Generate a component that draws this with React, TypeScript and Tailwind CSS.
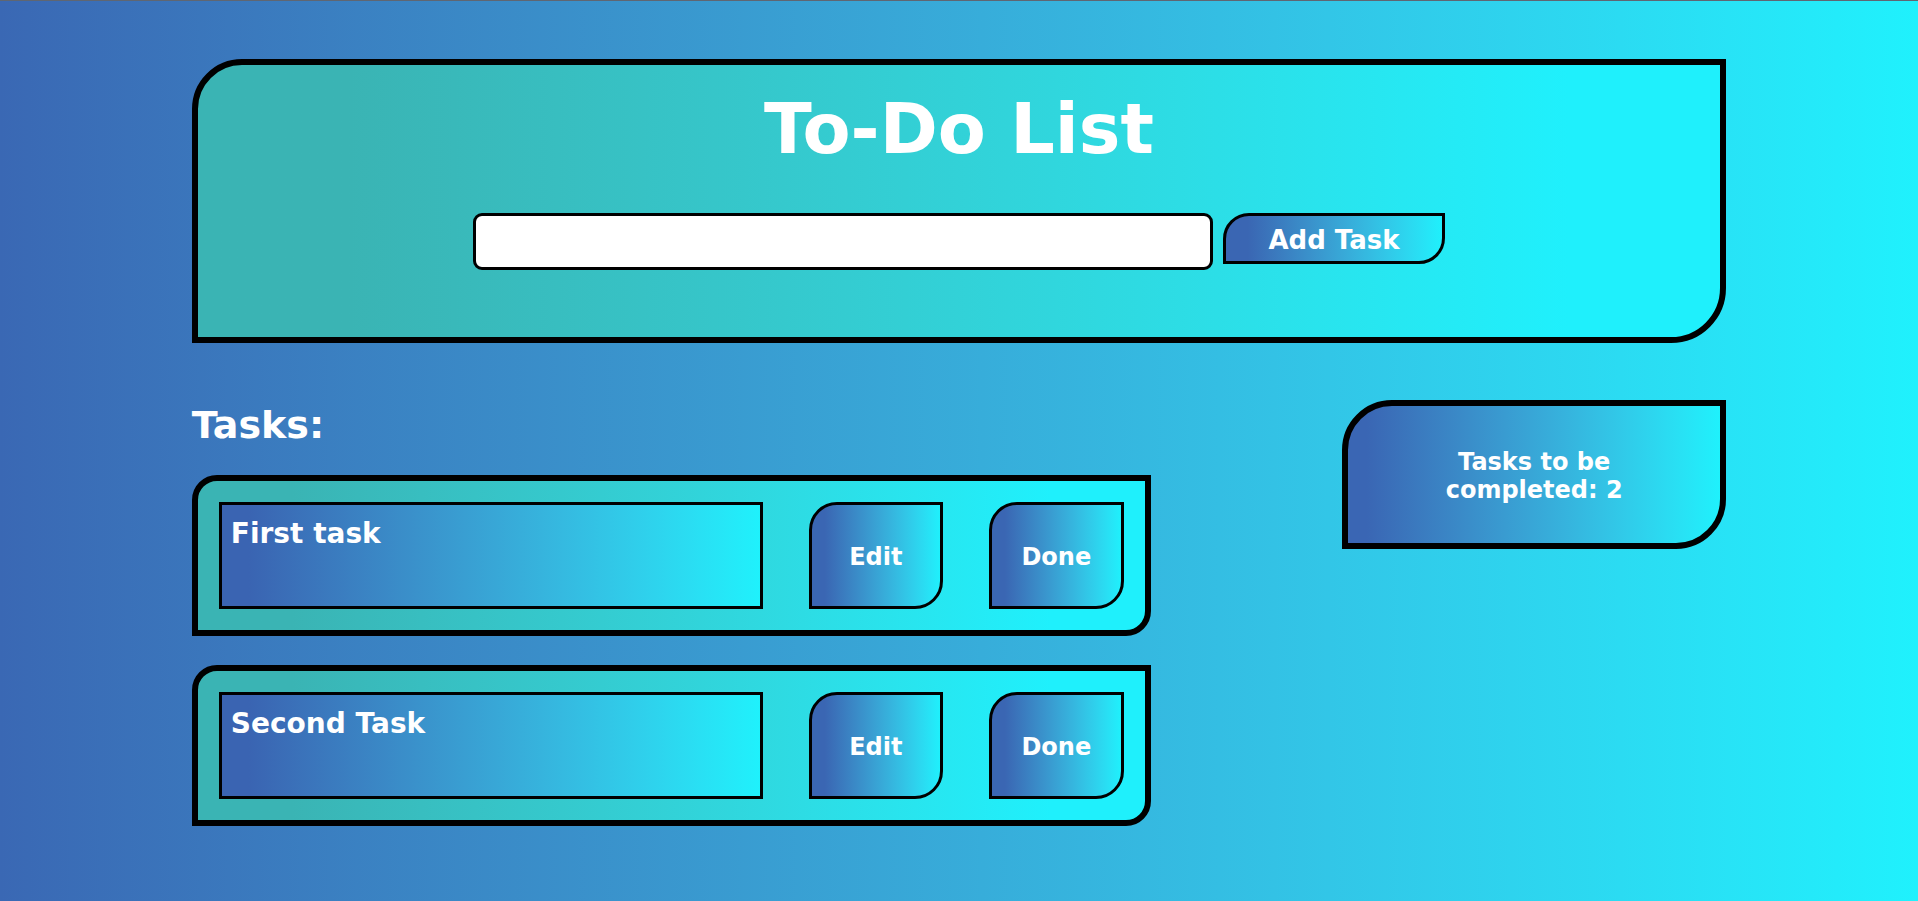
import React from "react";

const font = { fontFamily: '"DejaVu Sans", Verdana, sans-serif' };

function TaskCard({ text }: { text: string }) {
  return (
    <div className="w-[959px] border-[6px] border-black rounded-tl-[25px] rounded-br-[25px] bg-gradient-to-r from-[#3ab4b4] from-10% to-[#1ff0fc] to-90% p-[21px] flex gap-[46px]">
      <div className="w-[544px] h-[107px] border-[3px] border-black bg-gradient-to-r from-[#3a64b2] from-5% to-[#1ff1fc] to-100% pt-[8px] px-[9px]">
        <span className="text-[28px] font-bold text-white leading-normal">{text}</span>
      </div>
      <button className="w-[134px] h-[107px] border-[3px] border-black rounded-tl-[28px] rounded-br-[28px] bg-gradient-to-r from-[#3a66b3] from-10% to-[#1ff0fc] to-100% text-white text-[24px] font-bold flex items-center justify-center pt-[2px]">
        Edit
      </button>
      <button className="w-[135px] h-[107px] border-[3px] border-black rounded-tl-[28px] rounded-br-[28px] bg-gradient-to-r from-[#3a66b3] from-10% to-[#1ff0fc] to-100% text-white text-[24px] font-bold flex items-center justify-center pt-[2px]">
        Done
      </button>
    </div>
  );
}

export default function App() {
  return (
    <div
      style={font}
      className="min-h-screen w-full bg-gradient-to-r from-[#3a68b4] to-[#1ff1fd] border-t border-[#5f6672]"
    >
      <div className="w-[80%] mx-auto pt-[58px]">
        <div className="h-[284px] border-[6px] border-black rounded-tl-[50px] rounded-br-[55px] bg-gradient-to-r from-[#3ab4b4] from-10% to-[#1ff0fc] to-90% flex flex-col items-center pt-[25px]">
          <h1 className="text-[70px] leading-[79px] font-bold text-white">To-Do List</h1>
          <div className="mt-[44px] flex items-start justify-center gap-[10px]">
            <input
              type="text"
              className="w-[740px] h-[57px] bg-white border-[3px] border-black rounded-[9px] outline-none px-2 text-[20px]"
            />
            <button className="w-[222px] h-[51px] border-[3px] border-black rounded-tl-[26px] rounded-br-[26px] bg-gradient-to-r from-[#3a66b3] from-10% to-[#1ff0fc] to-100% text-white text-[26px] font-bold flex items-center justify-center pt-[3px]">
              Add Task
            </button>
          </div>
        </div>

        <div className="mt-[57px] flex justify-between items-start">
          <div className="flex flex-col pt-[4px]">
            <h2 className="text-[38px] leading-[42px] font-bold text-white">Tasks:</h2>
            <div className="mt-[29px] flex flex-col gap-[29px]">
              <TaskCard text="First task" />
              <TaskCard text="Second Task" />
            </div>
          </div>
          <div className="w-[384px] h-[149px] border-[6px] border-black rounded-tl-[50px] rounded-br-[50px] bg-gradient-to-r from-[#3a66b4] from-5% to-[#1ff1fc] to-100% flex items-center justify-center pt-[3px]">
            <p className="w-[200px] text-center text-white text-[24px] leading-[28px] font-bold">
              Tasks to be completed: 2
            </p>
          </div>
        </div>
      </div>
    </div>
  );
}
